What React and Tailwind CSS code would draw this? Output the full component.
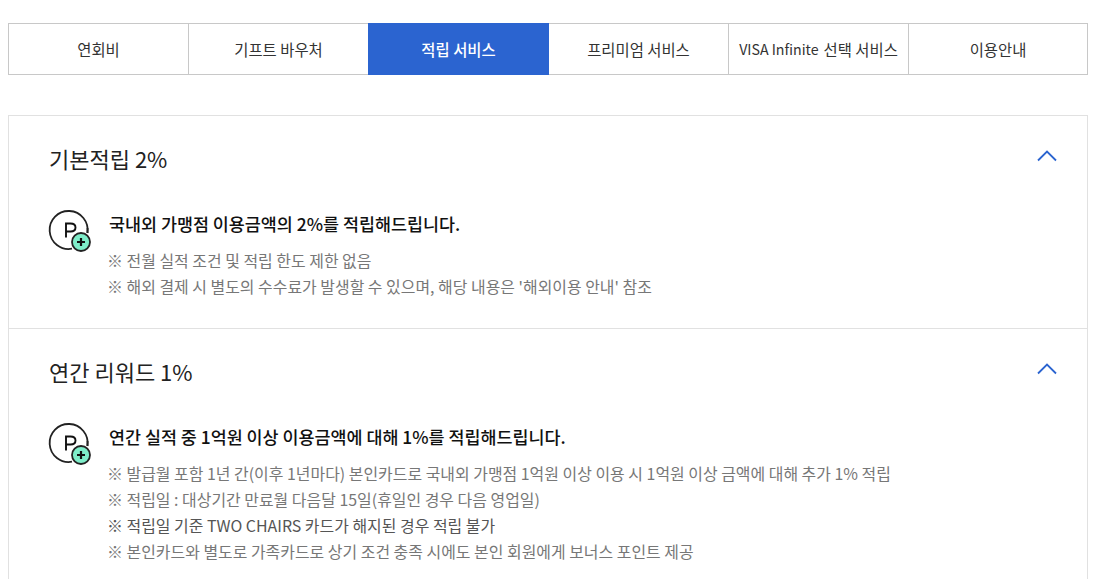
const tabs = [
  { t: "연회비" },
  { t: "기프트 바우처" },
  { t: "적립 서비스", active: true },
  { t: "프리미엄 서비스" },
  { t: "선택 서비스", pre: "VISA Infinite" },
  { t: "이용안내", last: true },
];

function PointIcon() {
  return (
    <svg width="44" height="44" viewBox="0 0 44 44" className="shrink-0 -mt-[3px] -ml-px" fill="none">
      <path d="M39.4 24 A19 19 0 1 0 24 39.7" stroke="#222" strokeWidth="1.8" />
      <path d="M39.5 19 V24" stroke="#222" strokeWidth="1.8" />
      <path d="M18 28.5 V14.5 H22.5 Q27.5 14.5 27.5 18.5 Q27.5 22.5 22.5 22.5 H18" stroke="#111" strokeWidth="1.9" />
      <circle cx="33" cy="33" r="9" fill="#7eedc9" stroke="#222" strokeWidth="1.8" />
      <path d="M29 33 H37 M33 29 V37" stroke="#111" strokeWidth="2.2" />
    </svg>
  );
}

function Section({ title, lead, notes, last }) {
  return (
    <section className={`px-10 ${last ? "pt-[32px] pb-[18px]" : "pt-[32px] pb-[29px] border-b border-[#e1e1e1]"}`}>
      <div className="flex items-center justify-between h-6">
        <h3 className="text-[22px] leading-6 text-[#222] font-normal -mt-[4px]">{title}</h3>
        <svg width="20" height="12" viewBox="0 0 20 12" fill="none" className="mr-[-10px] mt-[-9px]">
          <path d="M1 10.5 L10 1.5 L19 10.5" stroke="#2b64d0" strokeWidth="1.8" />
        </svg>
      </div>
      <div className="flex mt-[40px]">
        <PointIcon />
        <div className="flex-1 min-w-0 pl-[17px]">
          <p className="text-[17.4px] leading-[26px] font-medium text-[#111] mb-[10px] -mt-px">{lead}</p>
          {notes.map((n, i) => (
            <p key={i} className={`text-[15.95px] leading-[26px] whitespace-nowrap -ml-[2px] ${n.dark ? "text-[#555]" : "text-[#777]"}`}>{n.t}</p>
          ))}
        </div>
      </div>
    </section>
  );
}

export default function App() {
  return (
    <div className="w-[1117px] h-[579px] overflow-hidden bg-white px-2 pt-[23px]" style={{ fontFamily: '"Noto Sans CJK KR", "Noto Sans", sans-serif' }}>
      <div className="w-[1080px]">
        <nav className="grid grid-cols-6 h-[52px]">
          {tabs.map((tab) => (
            <div
              key={tab.t}
              className={`flex items-center justify-center whitespace-nowrap text-[15.4px] pt-[2px] ${
                tab.active
                  ? "bg-[#2b64d0] text-white font-medium mr-[-1px] relative"
                  : `text-[#333] border-y border-l border-[#c8c8c8] ${tab.last ? "border-r" : ""}`
              }`}
            >
              {tab.pre && <span className="text-[14.2px] mr-[5px]">{tab.pre}</span>}
              {tab.t}
            </div>
          ))}
        </nav>
        <div className="mt-10 border border-[#e1e1e1]">
          <Section
            title="기본적립 2%"
            lead="국내외 가맹점 이용금액의 2%를 적립해드립니다."
            notes={[
              { t: "※ 전월 실적 조건 및 적립 한도 제한 없음" },
              { t: "※ 해외 결제 시 별도의 수수료가 발생할 수 있으며, 해당 내용은 '해외이용 안내' 참조" },
            ]}
          />
          <Section
            last
            title="연간 리워드 1%"
            lead="연간 실적 중 1억원 이상 이용금액에 대해 1%를 적립해드립니다."
            notes={[
              { t: "※ 발급월 포함 1년 간(이후 1년마다) 본인카드로 국내외 가맹점 1억원 이상 이용 시 1억원 이상 금액에 대해 추가 1% 적립" },
              { t: "※ 적립일 : 대상기간 만료월 다음달 15일(휴일인 경우 다음 영업일)" },
              { t: "※ 적립일 기준 TWO CHAIRS 카드가 해지된 경우 적립 불가", dark: true },
              { t: "※ 본인카드와 별도로 가족카드로 상기 조건 충족 시에도 본인 회원에게 보너스 포인트 제공" },
            ]}
          />
        </div>
      </div>
    </div>
  );
}
